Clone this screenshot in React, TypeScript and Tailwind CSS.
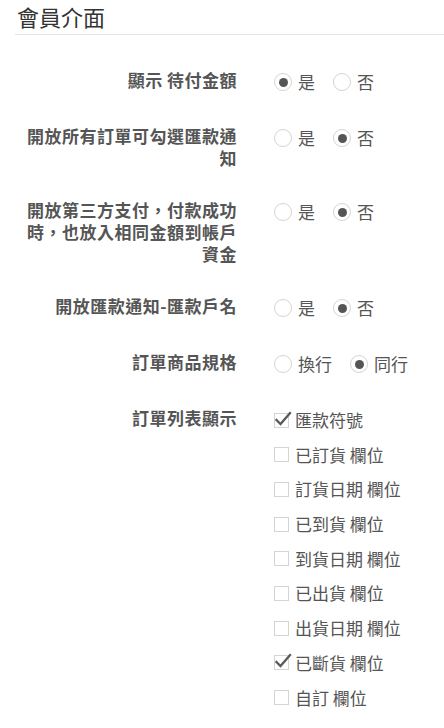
import React from 'react'

const FONT = '"Noto Sans CJK TC", "Noto Sans", sans-serif'

type Option = { label: string; checked: boolean }

function Radio({ label, checked }: Option) {
  return (
    <label className="flex items-center">
      <span className="flex h-[18px] w-[18px] items-center justify-center rounded-full border border-[#d4d4d4] bg-white">
        {checked && <span className="h-[9px] w-[9px] rounded-full bg-[#555]" />}
      </span>
      <span className="ml-[6px] text-[17px] leading-[26px] text-[#555]">{label}</span>
    </label>
  )
}

function Checkbox({ label, checked }: Option) {
  return (
    <label className="flex h-[26px] items-center">
      <span className="relative h-[15px] w-[15px] border border-[#d4d4d4] bg-white">
        {checked && (
          <svg className="absolute left-[-2px] top-[-4px]" width="19" height="19" viewBox="0 0 19 19">
            <path d="M3.5 10 L7.5 14 L17 3" fill="none" stroke="#5a5a5a" strokeWidth="2.3" strokeLinecap="square" />
          </svg>
        )}
      </span>
      <span className="ml-[6px] text-[17px] leading-[26px] text-[#555]">{label}</span>
    </label>
  )
}

function Row({ label, children }: { label: string; children: React.ReactNode }) {
  return (
    <div className="flex items-start">
      <div className="w-[222px] text-right text-[17px] font-bold leading-[22px] tracking-[0.5px] text-[#555]">
        {label}
      </div>
      <div className="ml-[37px]">{children}</div>
    </div>
  )
}

function RadioGroup({ options }: { options: Option[] }) {
  return (
    <div className="flex h-[26px] items-center gap-[18px]">
      {options.map((o) => (
        <Radio key={o.label} {...o} />
      ))}
    </div>
  )
}

const yesNo = (yes: boolean): Option[] => [
  { label: '是', checked: yes },
  { label: '否', checked: !yes },
]

const columns: Option[] = [
  { label: '匯款符號', checked: true },
  { label: '已訂貨 欄位', checked: false },
  { label: '訂貨日期 欄位', checked: false },
  { label: '已到貨 欄位', checked: false },
  { label: '到貨日期 欄位', checked: false },
  { label: '已出貨 欄位', checked: false },
  { label: '出貨日期 欄位', checked: false },
  { label: '已斷貨 欄位', checked: true },
  { label: '自訂 欄位', checked: false },
]

export default function App() {
  return (
    <div lang="zh-Hant-TW" className="min-h-[728px] w-[444px] bg-white pl-[15px]" style={{ fontFamily: FONT }}>
      <div className="border-b border-[#e5e5e5] pb-[2px] pl-[2px] text-[22px] leading-[32px] text-[#333]">
        會員介面
      </div>

      <div className="flex flex-col gap-[30px] pt-[34px]">
        <Row label="顯示 待付金額">
          <RadioGroup options={yesNo(true)} />
        </Row>
        <Row label="開放所有訂單可勾選匯款通知">
          <RadioGroup options={yesNo(false)} />
        </Row>
        <Row label="開放第三方支付，付款成功時，也放入相同金額到帳戶資金">
          <RadioGroup options={yesNo(false)} />
        </Row>
        <Row label="開放匯款通知-匯款戶名">
          <RadioGroup options={yesNo(false)} />
        </Row>
        <Row label="訂單商品規格">
          <RadioGroup
            options={[
              { label: '換行', checked: false },
              { label: '同行', checked: true },
            ]}
          />
        </Row>
        <Row label="訂單列表顯示">
          <div className="flex flex-col gap-[8.7px]">
            {columns.map((c) => (
              <Checkbox key={c.label} {...c} />
            ))}
          </div>
        </Row>
      </div>
    </div>
  )
}
